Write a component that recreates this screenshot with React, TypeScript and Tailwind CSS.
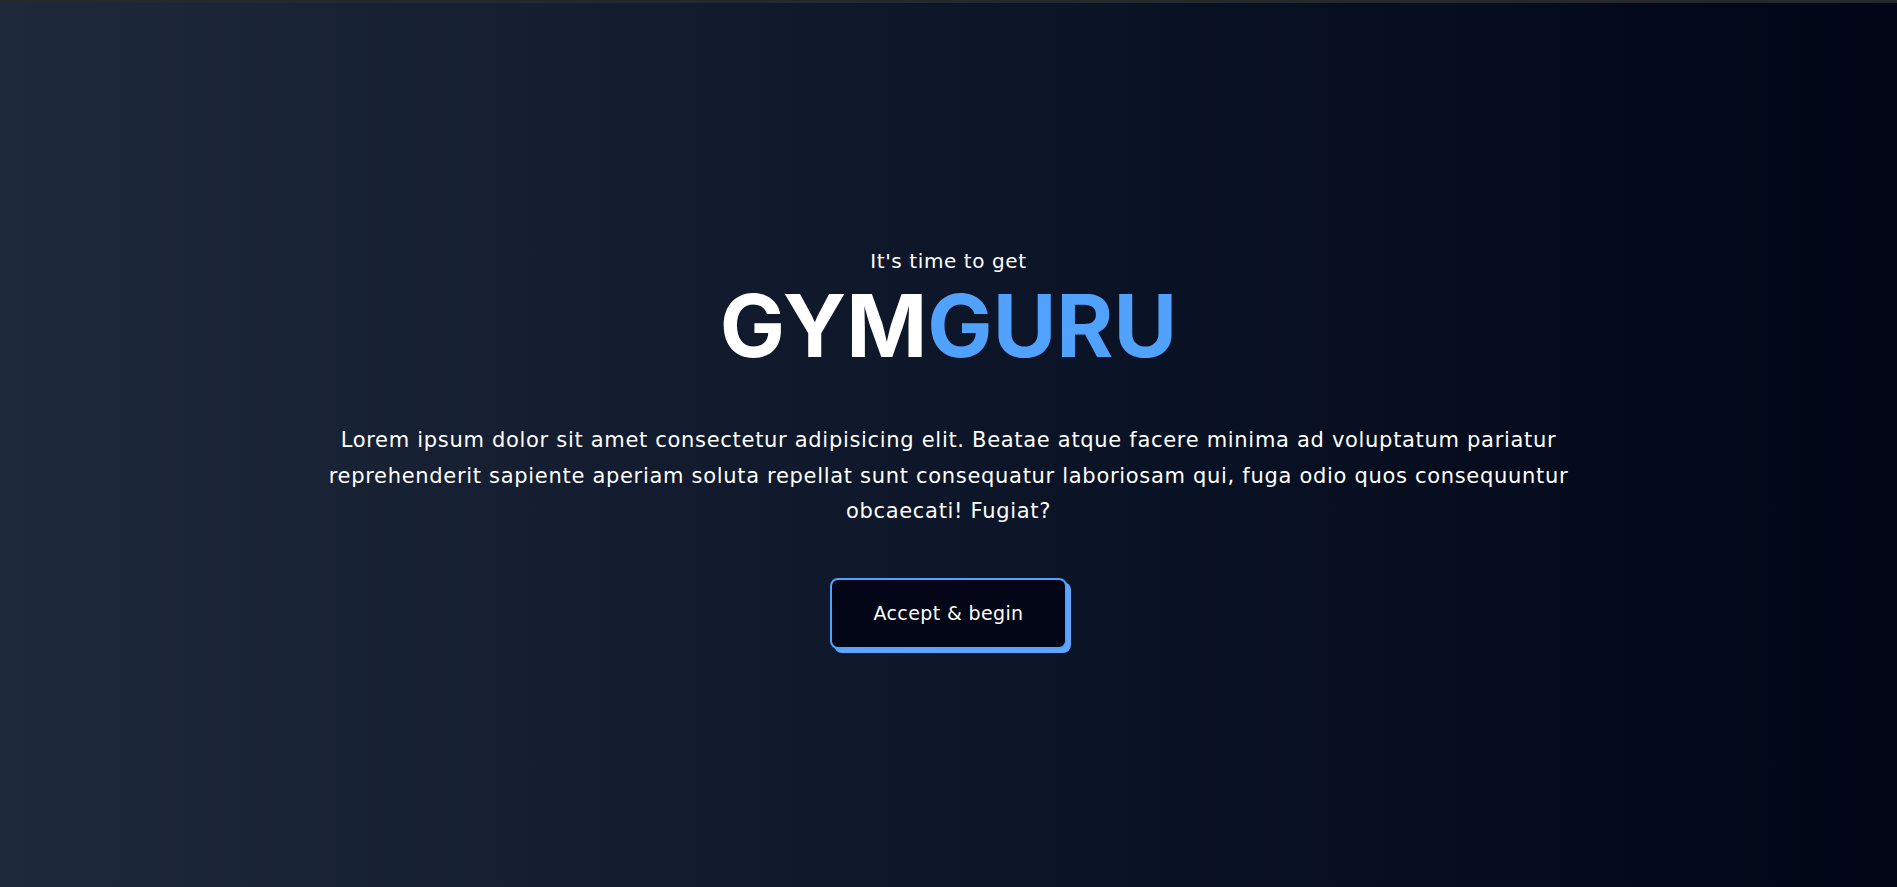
import React from "react";

const App: React.FC = () => {
    return (
        <div className="flex flex-col min-h-screen font-['DejaVu_Sans',sans-serif]">
            {/* thin top strip */}
            <div className="h-[3px] bg-[#25292b]" />
            <div className="flex flex-1 flex-col items-center justify-center pt-[12px] bg-linear-to-r from-[#1e293b] to-[#020617] text-white text-center">
                <p className="mb-[4px] text-xl leading-4 tracking-[0.03em]">It's time to get</p>
                <h1 className="font-['Inter',sans-serif] text-[87px] font-bold leading-[1.21]">
                    GYM<span className="text-blue-400">GURU</span>
                </h1>
                <p className="w-2/3 mt-[45px] text-[21px] leading-[35.5px] tracking-[0.033em]">
                    Lorem ipsum dolor sit amet consectetur adipisicing elit. Beatae atque facere minima ad voluptatum
                    pariatur reprehenderit sapiente aperiam soluta repellat sunt consequatur laboriosam qui, fuga odio
                    quos consequuntur obcaecati! Fugiat?
                </p>
                <button className="mt-12 px-[41px] py-5 text-[19px] leading-[27px] tracking-[0.02em] bg-[#020617] border-2 border-blue-400 rounded-lg shadow-[4px_4px_0_#60a5fa]">
                    Accept &amp; begin
                </button>
            </div>
        </div>
    );
};

export default App;
